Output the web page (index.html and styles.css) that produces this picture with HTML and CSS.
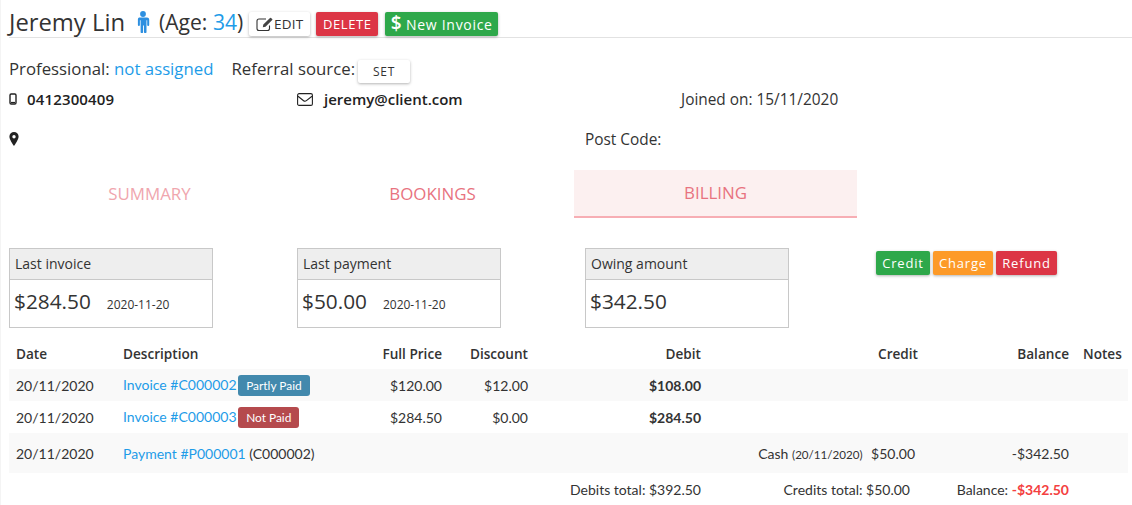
FILE: index.html
```html
<!DOCTYPE html>
<html lang="en">
<head>
<meta charset="utf-8">
<title>Jeremy Lin</title>
<link rel="stylesheet" href="styles.css">
</head>
<body>
<div class="page">
  <header class="head">
    <h1 class="name">Jeremy Lin</h1>
    <svg class="male" viewBox="0 0 14 22" aria-hidden="true"><circle cx="7" cy="3" r="2.9"/><path d="M3 6.4h8a2.2 2.2 0 0 1 2.2 2.2v5.4a1 1 0 0 1-2 0V9.2h-.7V21a1.2 1.2 0 0 1-2.5 0v-6.6h-.9V21a1.2 1.2 0 0 1-2.5 0V9.2h-.7V14a1 1 0 0 1-2 0V8.6A2.2 2.2 0 0 1 3 6.4z"/></svg>
    <span class="age">(Age: <a class="link">34</a>)</span>
    <button class="btn btn-white btn-edit"><svg class="edit-ic" viewBox="0 0 18 16" aria-hidden="true"><path d="M13.500 9.500v3a2 2 0 0 1-2 2H3a2 2 0 0 1-2-2V5a2 2 0 0 1 2-2h7" fill="none" stroke="#333" stroke-width="1.100"/><path d="M6.800 11.200l.5-2.600L14 1.900a.7.7 0 0 1 1 0l1.200 1.200a.7.7 0 0 1 0 1L9.500 10.700z" fill="#444"/></svg>EDIT</button>
    <button class="btn btn-red btn-del">DELETE</button>
    <button class="btn btn-green btn-new"><span class="dollar">$</span> New Invoice</button>
  </header>

  <div class="meta">
    <span>Professional: <a class="link">not assigned</a></span>
    <span class="ref">Referral source:</span>
    <button class="btn btn-white btn-set">SET</button>
  </div>

  <div class="contact">
    <div class="c1"><svg class="ic-phone" viewBox="0 0 8 12" aria-hidden="true"><rect x="1" y="1" width="6" height="10" rx="1.200" fill="none" stroke="#222" stroke-width="1.400"/><path d="M2 9.500h4" stroke="#222" stroke-width="1.200"/></svg><strong class="phone">0412300409</strong></div>
    <div class="c2"><svg class="ic-mail" viewBox="0 0 16 13" aria-hidden="true"><rect x=".6" y=".6" width="14.800" height="11.800" rx="1.500" fill="none" stroke="#222" stroke-width="1.100"/><path d="M1 3.200l5.600 4.500a2.200 2.200 0 0 0 2.800 0L15 3.200" fill="none" stroke="#222" stroke-width="1.100"/></svg><strong>jeremy@client.com</strong></div>
    <div class="c3">Joined on: 15/11/2020</div>
  </div>

  <div class="address">
    <svg class="ic-pin" viewBox="0 0 10 14" aria-hidden="true"><path fill-rule="evenodd" d="M5 0a4.600 4.600 0 0 1 4.600 4.600C9.600 7.400 6.200 12.500 5 14 3.800 12.500.4 7.400.4 4.600A4.600 4.600 0 0 1 5 0zm0 3a1.700 1.700 0 1 0 0 3.400A1.700 1.700 0 0 0 5 3z" fill="#222"/></svg>
    <span class="post">Post Code:</span>
  </div>

  <nav class="tabs">
    <a class="tab tab-faded">SUMMARY</a>
    <a class="tab">BOOKINGS</a>
    <a class="tab tab-active">BILLING</a>
  </nav>

  <section class="stats">
    <div class="card">
      <div class="card-h">Last invoice</div>
      <div class="card-b"><span class="amt">$284.50</span><span class="dt">2020-11-20</span></div>
    </div>
    <div class="card">
      <div class="card-h">Last payment</div>
      <div class="card-b"><span class="amt">$50.00</span><span class="dt">2020-11-20</span></div>
    </div>
    <div class="card">
      <div class="card-h">Owing amount</div>
      <div class="card-b"><span class="amt">$342.50</span></div>
    </div>
    <div class="actions">
      <button class="btn btn-green btn-sm">Credit</button>
      <button class="btn btn-orange btn-sm">Charge</button>
      <button class="btn btn-red btn-sm">Refund</button>
    </div>
  </section>

  <table class="ledger">
    <colgroup>
      <col class="w-date"><col class="w-desc"><col class="w-full"><col class="w-disc"><col class="w-debit"><col class="w-credit"><col class="w-bal"><col class="w-notes">
    </colgroup>
    <thead>
      <tr><th>Date</th><th>Description</th><th class="r">Full Price</th><th class="r">Discount</th><th class="r">Debit</th><th class="r">Credit</th><th class="r">Balance</th><th class="r">Notes</th></tr>
    </thead>
    <tbody>
      <tr class="stripe">
        <td>20/11/2020</td><td><a class="link">Invoice #C000002</a> <span class="tag tag-blue">Partly Paid</span></td><td class="r">$120.00</td><td class="r">$12.00</td><td class="r"><b>$108.00</b></td><td></td><td></td><td></td>
      </tr>
      <tr>
        <td>20/11/2020</td><td><a class="link">Invoice #C000003</a> <span class="tag tag-red">Not Paid</span></td><td class="r">$284.50</td><td class="r">$0.00</td><td class="r"><b>$284.50</b></td><td></td><td></td><td></td>
      </tr>
      <tr class="stripe tall">
        <td>20/11/2020</td><td><a class="link">Payment #P000001</a> (C000002)</td><td></td><td></td><td></td><td class="r credit-cell">Cash <small>(20/11/2020)</small> <span class="cash">$50.00</span></td><td class="r">-$342.50</td><td></td>
      </tr>
    </tbody>
    <tfoot>
      <tr>
        <td></td><td></td><td></td><td></td><td class="r total">Debits total: $392.50</td><td class="r total credits-total">Credits total: $50.00</td><td class="r total">Balance: <b class="neg">-$342.50</b></td><td></td>
      </tr>
    </tfoot>
  </table>
</div>
</body>
</html>
```

FILE: styles.css
```css
* { box-sizing: border-box; }
html, body { margin: 0; padding: 0; background: #fff; }
body { font-family: "Open Sans", "Liberation Sans", sans-serif; color: #333; font-size: 16px; }
.page { width: 1132px; height: 505px; overflow: hidden; border-left: 1px solid #f4f4f4; }
.link { color: #1e9ce8; }

.head { display: flex; align-items: flex-start; height: 38px; margin-left: 8px; padding-top: 7px; border-bottom: 1px solid #e2e2e2; }
.name { margin: 0; font-size: 23.800px; font-weight: 400; line-height: 30px; color: #333; }
.male { width: 14px; height: 22px; margin: 4px 0 0 11px; fill: #2d8fe0; }
.age { font-size: 21.100px; margin-left: 9px; line-height: 30px; }
.btn { font-family: "Open Sans", "Liberation Sans", sans-serif; border: 0; border-radius: 2px; padding: 0; cursor: pointer; box-shadow: 0 1px 3px rgba(0,0,0,.3); font-size: 13px; letter-spacing: .8px; }
.btn-white { background: #fff; color: #333; }
.btn-red { background: #dc3545; color: #fff; }
.btn-green { background: #2ea84a; color: #fff; }
.btn-orange { background: #fd9a28; color: #fff; }
.btn-edit { flex: none; width: 61px; height: 24px; margin: 5px 0 0 6px; display: flex; align-items: center; justify-content: center; letter-spacing: .3px; font-size: 13.500px; }
.edit-ic { width: 18px; height: 16px; }
.btn-del { flex: none; width: 62px; height: 24px; margin: 5px 0 0 6px; letter-spacing: .6px; }
.btn-new { flex: none; width: 113px; height: 24px; margin: 5px 0 0 7px; font-size: 14px; letter-spacing: .7px; }
.dollar { font-size: 19px; font-weight: 600; line-height: 14px; letter-spacing: 0; }

.meta { display: flex; align-items: flex-start; height: 48px; margin-left: 8px; font-size: 16.800px; line-height: 24px; padding-top: 19px; }
.ref { margin-left: 18px; }
.btn-set { width: 52px; height: 23px; margin: 3px 0 0 3px; font-size: 12px; }

.contact { display: flex; height: 26px; margin-left: 8px; align-items: center; font-size: 15.400px; }
.contact strong { font-weight: 600; color: #222; font-size: 15px; }
.contact .phone { letter-spacing: .15px; }
.c1 { width: 288px; display: flex; align-items: center; }
.c2 { width: 384px; display: flex; align-items: center; }
.ic-phone { width: 8px; height: 12px; margin-right: 10px; }
.ic-mail { width: 16px; height: 13px; margin-right: 11px; }
.ic-pin { width: 10px; height: 14px; }

.address { display: flex; align-items: center; height: 54px; margin-left: 8px; font-size: 15.400px; }
.post { margin-left: 566px; }

.tabs { display: flex; margin: 4px 0 0 7px; height: 48px; }
.tab { width: 283px; display: flex; align-items: center; justify-content: center; font-size: 16.900px; color: #e8737f; padding-bottom: 2px; }
.tab-faded { color: #f0a6ae; }
.tab-active { background: #fcf0f0; border-bottom: 2px solid #f7aeb4; }

.stats { display: flex; margin: 30px 0 0 8px; align-items: flex-start; }
.card { width: 204px; height: 80px; margin-right: 84px; border: 1px solid #c8c8c8; }
.card-h { height: 31px; background: #eee; border-bottom: 1px solid #c8c8c8; padding-left: 5px; font-size: 14px; line-height: 30px; }
.card-b { display: flex; align-items: baseline; padding: 6px 0 0 4px; line-height: 30px; }
.amt { font-size: 20.800px; color: #333; }
.dt { font-size: 12px; margin-left: 16px; }
.actions { display: flex; gap: 3px; margin: 3px 0 0 3px; }
.btn-sm { height: 24px; font-size: 13px; padding: 0 6px; white-space: nowrap; }
.btn-sm.btn-green { width: 54px; }
.btn-sm.btn-orange { width: 60px; }
.btn-sm.btn-red { width: 61px; }

.ledger { border-collapse: collapse; table-layout: fixed; width: 1119px; margin: 9px 0 0 8px; font-family: Lato, "Open Sans", sans-serif; font-size: 14px; color: #333; }
.w-date { width: 107px; } .w-desc { width: 259px; } .w-full { width: 74px; } .w-disc { width: 86px; }
.w-debit { width: 173px; } .w-credit { width: 217px; } .w-bal { width: 151px; } .w-notes { width: 52px; }
.ledger th { font-family: "Open Sans", sans-serif; font-size: 13.600px; font-weight: 600; color: #333; height: 32px; padding: 0 7px; text-align: left; white-space: nowrap; }
.ledger th.r, .ledger td.r { text-align: right; }
.ledger td { height: 32px; padding: 0 7px; white-space: nowrap; }
.stripe { background: #f9f9f9; }
.tall td { height: 40px; }
.credits-total { padding-right: 15px !important; }
.credit-cell small { font-size: 11.600px; }
.cash { margin-left: 5px; margin-right: 3px; }
.tag { display: inline-block; color: #fff; font-size: 11.900px; line-height: 21px; height: 21px; padding: 0 8px; border-radius: 3px; margin-left: -2px; }
.tag-blue { background: #4289ad; }
.tag-red { background: #b54a4d; }
.neg { color: #f44040; }
```
